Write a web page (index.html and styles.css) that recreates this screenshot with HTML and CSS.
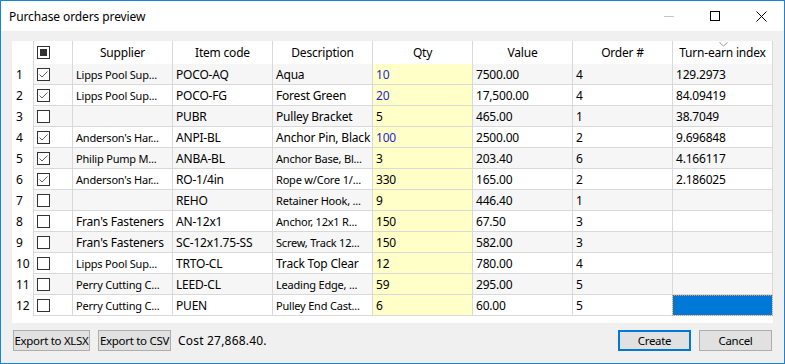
FILE: index.html
```html
<!DOCTYPE html>
<html>
<head>
<meta charset="utf-8">
<link rel="stylesheet" href="styles.css">
</head>
<body>
<div class="window">
  <div class="titlebar">
    <span class="title">Purchase orders preview</span>
    <div class="controls">
      <span class="ctl"><svg width="10" height="10" viewBox="0 0 10 10"><path d="M0 5.5H10" stroke="#c6c6c6" stroke-width="1"/></svg></span>
      <span class="ctl"><svg width="10" height="10" viewBox="0 0 10 10"><rect x="0.5" y="0.5" width="9" height="9" fill="none" stroke="#000" stroke-width="1"/></svg></span>
      <span class="ctl"><svg width="11" height="11" viewBox="0 0 11 11"><path d="M0.5 0.5L10.5 10.5M10.5 0.5L0.5 10.5" stroke="#000" stroke-width="1"/></svg></span>
    </div>
  </div>
  <div class="content">
    <div class="grid">
      <div class="row head">
        <div class="rh"></div>
        <div class="cell chk"><span class="cb partial"><span class="fill"></span></span></div>
        <div class="cell">Supplier</div>
        <div class="cell">Item code</div>
        <div class="cell">Description</div>
        <div class="cell">Qty</div>
        <div class="cell">Value</div>
        <div class="cell">Order #</div>
        <div class="cell last sorted">Turn-earn index<svg class="sort" width="9" height="5" viewBox="0 0 9 5"><path d="M0.5 0.5L4.5 4L8.5 0.5" fill="none" stroke="#9a9a9a" stroke-width="1"/></svg></div>
      </div>

      <div class="row odd">
        <div class="rh">1</div>
        <div class="cell chk"><span class="cb"><svg width="11" height="11" viewBox="0 0 11 11"><path d="M1.5 5.5L4 8L9.5 2.5" fill="none" stroke="#606060" stroke-width="1"/></svg></span></div>
        <div class="cell sm">Lipps Pool Sup...</div>
        <div class="cell">POCO-AQ</div>
        <div class="cell">Aqua</div>
        <div class="cell qty blue">10</div>
        <div class="cell">7500.00</div>
        <div class="cell">4</div>
        <div class="cell last">129.2973</div>
      </div>
      <div class="row">
        <div class="rh">2</div>
        <div class="cell chk"><span class="cb"><svg width="11" height="11" viewBox="0 0 11 11"><path d="M1.5 5.5L4 8L9.5 2.5" fill="none" stroke="#606060" stroke-width="1"/></svg></span></div>
        <div class="cell sm">Lipps Pool Sup...</div>
        <div class="cell">POCO-FG</div>
        <div class="cell">Forest Green</div>
        <div class="cell qty blue">20</div>
        <div class="cell">17,500.00</div>
        <div class="cell">4</div>
        <div class="cell last">84.09419</div>
      </div>
      <div class="row odd">
        <div class="rh">3</div>
        <div class="cell chk"><span class="cb"></span></div>
        <div class="cell sm"></div>
        <div class="cell">PUBR</div>
        <div class="cell">Pulley Bracket</div>
        <div class="cell qty">5</div>
        <div class="cell">465.00</div>
        <div class="cell">1</div>
        <div class="cell last">38.7049</div>
      </div>
      <div class="row">
        <div class="rh">4</div>
        <div class="cell chk"><span class="cb"><svg width="11" height="11" viewBox="0 0 11 11"><path d="M1.5 5.5L4 8L9.5 2.5" fill="none" stroke="#606060" stroke-width="1"/></svg></span></div>
        <div class="cell sm">Anderson's Har...</div>
        <div class="cell">ANPI-BL</div>
        <div class="cell">Anchor Pin, Black</div>
        <div class="cell qty blue">100</div>
        <div class="cell">2500.00</div>
        <div class="cell">2</div>
        <div class="cell last">9.696848</div>
      </div>
      <div class="row odd">
        <div class="rh">5</div>
        <div class="cell chk"><span class="cb"><svg width="11" height="11" viewBox="0 0 11 11"><path d="M1.5 5.5L4 8L9.5 2.5" fill="none" stroke="#606060" stroke-width="1"/></svg></span></div>
        <div class="cell sm">Philip Pump M...</div>
        <div class="cell">ANBA-BL</div>
        <div class="cell sm">Anchor Base, Bl...</div>
        <div class="cell qty">3</div>
        <div class="cell">203.40</div>
        <div class="cell">6</div>
        <div class="cell last">4.166117</div>
      </div>
      <div class="row">
        <div class="rh">6</div>
        <div class="cell chk"><span class="cb"><svg width="11" height="11" viewBox="0 0 11 11"><path d="M1.5 5.5L4 8L9.5 2.5" fill="none" stroke="#606060" stroke-width="1"/></svg></span></div>
        <div class="cell sm">Anderson's Har...</div>
        <div class="cell">RO-1/4in</div>
        <div class="cell sm">Rope w/Core 1/...</div>
        <div class="cell qty">330</div>
        <div class="cell">165.00</div>
        <div class="cell">2</div>
        <div class="cell last">2.186025</div>
      </div>
      <div class="row odd">
        <div class="rh">7</div>
        <div class="cell chk"><span class="cb"></span></div>
        <div class="cell sm"></div>
        <div class="cell">REHO</div>
        <div class="cell sm">Retainer Hook, ...</div>
        <div class="cell qty">9</div>
        <div class="cell">446.40</div>
        <div class="cell">1</div>
        <div class="cell last"></div>
      </div>
      <div class="row">
        <div class="rh">8</div>
        <div class="cell chk"><span class="cb"></span></div>
        <div class="cell">Fran's Fasteners</div>
        <div class="cell">AN-12x1</div>
        <div class="cell sm">Anchor, 12x1 R...</div>
        <div class="cell qty">150</div>
        <div class="cell">67.50</div>
        <div class="cell">3</div>
        <div class="cell last"></div>
      </div>
      <div class="row odd">
        <div class="rh">9</div>
        <div class="cell chk"><span class="cb"></span></div>
        <div class="cell">Fran's Fasteners</div>
        <div class="cell">SC-12x1.75-SS</div>
        <div class="cell sm">Screw, Track 12...</div>
        <div class="cell qty">150</div>
        <div class="cell">582.00</div>
        <div class="cell">3</div>
        <div class="cell last"></div>
      </div>
      <div class="row">
        <div class="rh">10</div>
        <div class="cell chk"><span class="cb"></span></div>
        <div class="cell sm">Lipps Pool Sup...</div>
        <div class="cell">TRTO-CL</div>
        <div class="cell">Track Top Clear</div>
        <div class="cell qty">12</div>
        <div class="cell">780.00</div>
        <div class="cell">4</div>
        <div class="cell last"></div>
      </div>
      <div class="row odd">
        <div class="rh">11</div>
        <div class="cell chk"><span class="cb"></span></div>
        <div class="cell sm">Perry Cutting C...</div>
        <div class="cell">LEED-CL</div>
        <div class="cell sm">Leading Edge, ...</div>
        <div class="cell qty">59</div>
        <div class="cell">295.00</div>
        <div class="cell">5</div>
        <div class="cell last"></div>
      </div>
      <div class="row">
        <div class="rh">12</div>
        <div class="cell chk"><span class="cb"></span></div>
        <div class="cell sm">Perry Cutting C...</div>
        <div class="cell">PUEN</div>
        <div class="cell sm">Pulley End Cast...</div>
        <div class="cell qty">6</div>
        <div class="cell">60.00</div>
        <div class="cell">5</div>
        <div class="cell last selected"></div>
      </div>
    </div>
    <div class="footer">
      <div class="left">
        <button class="btn xlsx">Export to XLSX</button>
        <button class="btn csv">Export to CSV</button>
        <span class="cost">Cost 27,868.40.</span>
      </div>
      <div class="right">
        <button class="btn default">Create</button>
        <button class="btn">Cancel</button>
      </div>
    </div>
  </div>
</div>
</body>
</html>
```
FILE: styles.css
```css
* { box-sizing: border-box; }
html, body { margin: 0; padding: 0; }
body {
  font-family: "Noto Sans", "Segoe UI", sans-serif;
  font-size: 12px;
  color: #000;
  background: #f0f0f0;
}
.window {
  width: 785px;
  height: 364px;
  border: 1px solid #1883d7;
  background: #f0f0f0;
  display: flex;
  flex-direction: column;
}
.titlebar {
  height: 30px;
  background: #fff;
  display: flex;
  align-items: center;
  justify-content: space-between;
  padding-left: 8px;
}
.title { font-size: 12px; letter-spacing: -0.1px; }
.controls { display: flex; height: 100%; }
.ctl {
  width: 46px;
  height: 30px;
  display: flex;
  align-items: center;
  justify-content: center;
}
.content {
  padding: 10px 11px 0 11px;
}
.grid {
  width: 761px;
  height: 282px;
  background: #fff;
  display: grid;
  grid-template-columns: 21px 39px repeat(6, 100px) 101px;
  grid-template-rows: 23px;
  grid-auto-rows: 21px;
  align-content: start;
}
.row { display: contents; }
.rh {
  padding-left: 4px;
  display: flex;
  align-items: center;
  background: #fff;
}
.cell {
  border-left: 1px solid #d9d9d9;
  border-bottom: 1px solid #d9d9d9;
  padding-left: 3px;
  display: flex;
  align-items: center;
  white-space: nowrap;
  overflow: hidden;
  letter-spacing: -0.2px;
}
.cell.last { border-right: 1px solid #d9d9d9; }
.head .cell {
  border-bottom: none;
  justify-content: center;
  padding-left: 0;
  background: #fff;
}
.head .cell.chk { justify-content: flex-start; padding-left: 3px; }
.head .sorted { position: relative; }
.sort {
  position: absolute;
  top: 1px;
  left: 46px;
}
.odd .cell { background: #f6f6f6; }
.cell.sm { font-size: 11px; }
.cell.qty, .odd .cell.qty { background: #ffffc8; }
.cell.blue { color: #1f1fd6; }
.cell.selected {
  background: #0078d7;
  outline: 1px dotted #e0a050;
  outline-offset: -1px;
}
.cb {
  width: 13px;
  height: 13px;
  border: 1px solid #333;
  background: #fff;
  display: flex;
  align-items: center;
  justify-content: center;
}
.cb .fill {
  width: 7px;
  height: 7px;
  background: #333;
}
.footer {
  margin-top: 7px;
  width: 761px;
  display: flex;
  justify-content: space-between;
  align-items: center;
}
.left, .right { display: flex; align-items: center; gap: 8px; }
.left { padding-left: 1px; }
.right { padding-right: 1px; }
.btn {
  height: 21px;
  width: 73px;
  border: 1px solid #adadad;
  background: #e1e1e1;
  font-family: "Noto Sans", "Segoe UI", sans-serif;
  font-size: 11.5px;
  color: #000;
  padding: 0;
  letter-spacing: -0.3px;
  white-space: nowrap;
  overflow: hidden;
}
.btn.xlsx { width: 77px; }
.btn.default { border: 2px solid #0078d7; }
.cost { margin-left: -1px; letter-spacing: 0.2px; }
```
